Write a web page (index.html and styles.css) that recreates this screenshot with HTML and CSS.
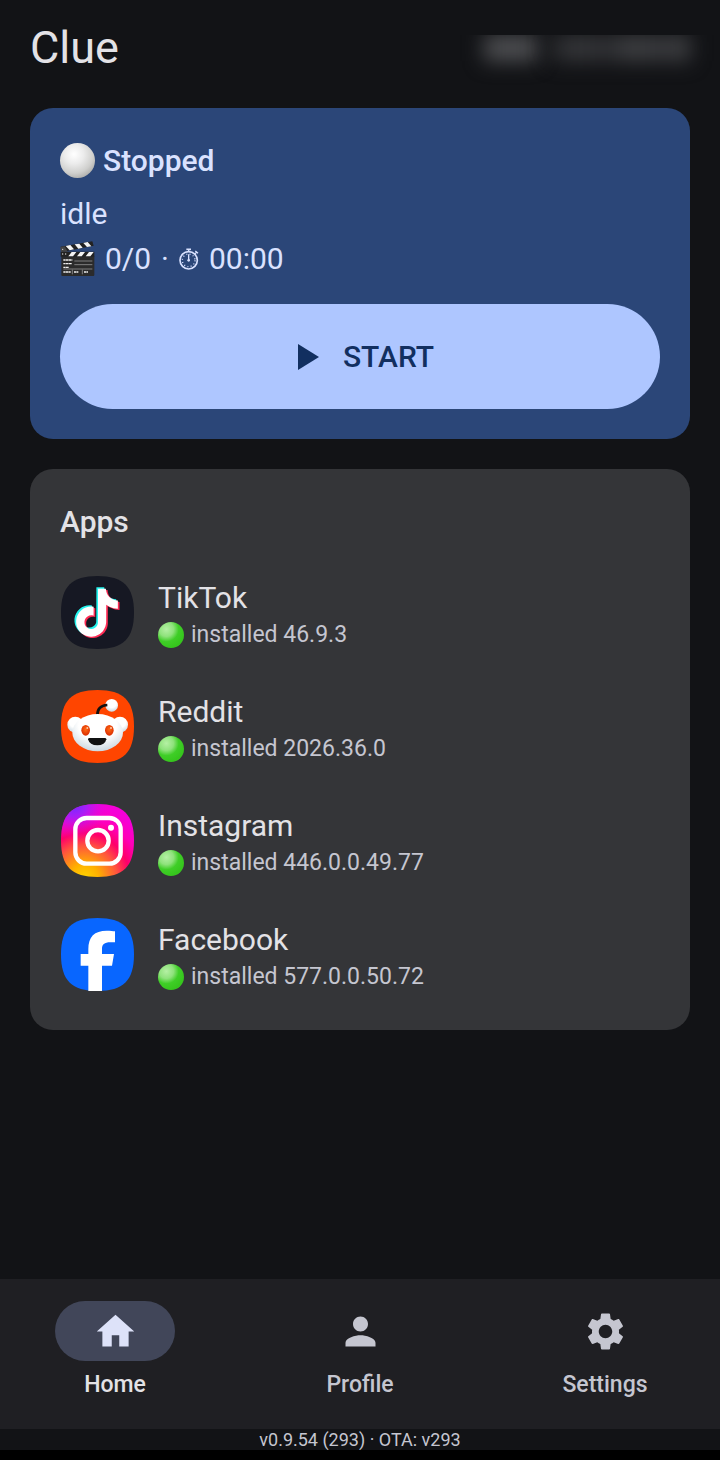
FILE: index.html
```html
<!DOCTYPE html>
<html lang="en">
<head>
    <meta charset="UTF-8">
    <meta name="viewport" content="width=device-width, initial-scale=1.0">
    <title>Clue</title>
    <link rel="stylesheet" href="styles.css">
</head>
<body>

<header class="topbar">
    <h1>Clue</h1>
    <div class="account" aria-hidden="true">
        <span class="smudge smudge-short"></span>
        <span class="smudge smudge-long"></span>
    </div>
</header>

<main class="content">
    <!-- Session status -->
    <section class="card status-card">
        <h2 class="status">
            <span class="ball"></span>
            Stopped
        </h2>
        <p class="line">idle</p>
        <p class="line stats">
            <svg class="clapper" viewBox="0 0 105 105" aria-hidden="true">
                <path fill="#2b2b2b" d="M4 46h99v56q0 3-3 3H7q-3 0-3-3z"/>
                <path fill="#222" d="M2 17L97 1l4 13L6 33z"/>
                <path fill="#f4f4f4" d="M17 15l14-3 11 13-13 3zM44 10l14-2 10 12-13 3zM70 6l13-3 11 13-13 2z"/>
                <path fill="#222" d="M2 32h101v15H2z"/>
                <path fill="#f4f4f4" d="M35 33h14L39 46H25zM61 33h14L65 46H51zM87 33h14L91 46H77z"/>
                <path fill="#444" d="M1 18l13-2 9 16H3z"/>
                <circle cx="8" cy="25" r="2" fill="#ddd"/>
                <circle cx="8" cy="39" r="2" fill="#ddd"/>
                <circle cx="17" cy="39" r="2" fill="#ddd"/>
                <path stroke="#aaa" stroke-width="2" d="M43 60h54M43 71h54M10 84h87M37 86v14M67 86v14"/>
                <path stroke="#eee" stroke-width="4" stroke-dasharray="7 1" d="M10 57h27M10 68h26M10 79h17M10 93h22M42 93h13M72 93h12"/>
            </svg>
            <span>0/0</span>
            <span>·</span>
            <svg class="stopwatch" viewBox="0 0 60 66" fill="none" stroke="currentColor" aria-hidden="true">
                <circle cx="29" cy="37" r="26" stroke-width="5"/>
                <circle cx="29" cy="37" r="19" stroke-width="4" stroke-dasharray="3 7"/>
                <path stroke-width="4" d="M29 3v9M29 19v20M48 17l5-5M49 9l8 7"/>
                <path stroke-width="5" d="M22 4h14"/>
                <circle cx="29" cy="37" r="4" fill="currentColor" stroke="none"/>
            </svg>
            <span>00:00</span>
        </p>
        <button class="start" type="button">
            <svg class="play" viewBox="0 0 21 26" aria-hidden="true"><path d="M0 0v26l21-13z"/></svg>
            START
        </button>
    </section>

    <!-- Installed apps -->
    <section class="card apps-card">
        <h2>Apps</h2>
        <ul class="apps">
            <li class="app">
                <svg class="app-icon" viewBox="0 0 225 225" aria-hidden="true">
                    <defs>
                        <path id="tile" d="M112.5 3C190 3 222 35 222 112.5S190 222 112.5 222 3 190 3 112.5 35 3 112.5 3z"/>
                        <path id="note" d="M12.525.02c1.31-.02 2.61-.01 3.91-.02.08 1.53.63 3.09 1.75 4.17 1.12 1.11 2.7 1.62 4.24 1.79v4.03c-1.44-.05-2.89-.35-4.2-.97-.57-.26-1.1-.59-1.62-.93-.01 2.92.01 5.84-.02 8.75-.08 1.4-.54 2.79-1.35 3.94-1.31 1.92-3.58 3.17-5.91 3.21-1.43.08-2.86-.31-4.08-1.03-2.02-1.19-3.44-3.37-3.65-5.71-.02-.5-.03-1-.01-1.49.18-1.9 1.12-3.72 2.58-4.96 1.66-1.44 3.98-2.13 6.15-1.72.02 1.48-.04 2.96-.04 4.44-.99-.32-2.15-.23-3.02.37-.63.41-1.11 1.04-1.36 1.75-.21.51-.15 1.07-.14 1.61.24 1.64 1.82 3.02 3.5 2.87 1.12-.01 2.19-.66 2.77-1.61.19-.33.4-.67.41-1.06.1-1.79.06-3.57.07-5.36.01-4.03-.01-8.05.02-12.07z"/>
                    </defs>
                    <use href="#tile" fill="#161823"/>
                    <use href="#note" fill="#25f4ee" transform="translate(34 37) scale(6)"/>
                    <use href="#note" fill="#fe2c55" transform="translate(44 45) scale(6)"/>
                    <use href="#note" fill="#fff" transform="translate(39 41) scale(6)"/>
                </svg>
                <div class="app-text">
                    <h3>TikTok</h3>
                    <p><span class="dot"></span>installed 46.9.3</p>
                </div>
            </li>
            <li class="app">
                <svg class="app-icon" viewBox="0 0 225 225" aria-hidden="true">
                    <defs>
                        <radialGradient id="snoo" cx=".5" cy=".3" r=".75">
                            <stop offset=".5" stop-color="#fff"/>
                            <stop offset="1" stop-color="#c3d2dc"/>
                        </radialGradient>
                        <radialGradient id="eye" cx=".5" cy=".4" r=".6">
                            <stop offset="0" stop-color="#ff6a14"/>
                            <stop offset="1" stop-color="#d92b00"/>
                        </radialGradient>
                    </defs>
                    <use href="#tile" fill="#ff4500"/>
                    <g transform="translate(-30 -27)">
                        <circle cx="76" cy="134" r="24" fill="url(#snoo)"/>
                        <circle cx="210" cy="134" r="24" fill="url(#snoo)"/>
                        <circle cx="185" cy="76" r="19" fill="url(#snoo)"/>
                        <path d="M142 106c0-18 9-30 30-31" fill="none" stroke="#111" stroke-width="8"/>
                        <ellipse cx="143" cy="158" rx="76" ry="56" fill="url(#snoo)"/>
                        <ellipse cx="107" cy="151" rx="13" ry="16" fill="url(#eye)"/>
                        <ellipse cx="178" cy="151" rx="13" ry="16" fill="url(#eye)"/>
                        <circle cx="112" cy="144" r="3" fill="#ffc9a8"/>
                        <circle cx="183" cy="144" r="3" fill="#ffc9a8"/>
                        <path d="M114 178q0-4 5-4h45q5 0 5 4-4 18-27 18t-28-18z" fill="#111"/>
                    </g>
                </svg>
                <div class="app-text">
                    <h3>Reddit</h3>
                    <p><span class="dot"></span>installed 2026.36.0</p>
                </div>
            </li>
            <li class="app">
                <svg class="app-icon" viewBox="0 0 225 225" aria-hidden="true">
                    <defs>
                        <radialGradient id="sunset" cx=".32" cy="1.02" r="1">
                            <stop offset="0" stop-color="#ffd600"/>
                            <stop offset=".2" stop-color="#ffb000"/>
                            <stop offset=".45" stop-color="#ff543e"/>
                            <stop offset=".62" stop-color="#ff0069"/>
                            <stop offset=".8" stop-color="#ff00b8"/>
                            <stop offset="1" stop-color="#f500d8"/>
                        </radialGradient>
                        <radialGradient id="violet" cx=".18" cy="0" r=".5">
                            <stop offset="0" stop-color="#6a2cff"/>
                            <stop offset=".35" stop-color="#9b22ff" stop-opacity=".85"/>
                            <stop offset="1" stop-color="#f500d8" stop-opacity="0"/>
                        </radialGradient>
                    </defs>
                    <use href="#tile" fill="url(#sunset)"/>
                    <use href="#tile" fill="url(#violet)"/>
                    <g transform="translate(-30 -24)" fill="none" stroke="#fff" stroke-width="13">
                        <rect x="76" y="69" width="136" height="137" rx="34"/>
                        <circle cx="144" cy="137" r="32"/>
                        <circle cx="183" cy="98" r="9" fill="#fff" stroke="none"/>
                    </g>
                </svg>
                <div class="app-text">
                    <h3>Instagram</h3>
                    <p><span class="dot"></span>installed 446.0.0.49.77</p>
                </div>
            </li>
            <li class="app">
                <svg class="app-icon" viewBox="0 0 225 225" aria-hidden="true">
                    <use href="#tile" fill="#0866ff"/>
                    <path fill="#fff" transform="translate(-30 -27)" d="M115 249v-76H92v-35h23v-14c0-38 18-56 55-56 11 0 20 1 25 2v33h-14c-18 0-25 6-25 21v14h36l-6 35h-30v76z"/>
                </svg>
                <div class="app-text">
                    <h3>Facebook</h3>
                    <p><span class="dot"></span>installed 577.0.0.50.72</p>
                </div>
            </li>
        </ul>
    </section>
</main>

<nav class="tabs">
    <a class="tab active" href="#home">
        <span class="tab-icon">
            <svg viewBox="0 0 24 24" aria-hidden="true"><path d="M10 20v-6h4v6h5v-8h3L12 3 2 12h3v8z"/></svg>
        </span>
        Home
    </a>
    <a class="tab" href="#profile">
        <span class="tab-icon">
            <svg viewBox="0 0 24 24" aria-hidden="true"><path d="M12 12c2.21 0 4-1.79 4-4s-1.79-4-4-4-4 1.79-4 4 1.79 4 4 4zm0 2c-2.67 0-8 1.34-8 4v2h16v-2c0-2.66-5.33-4-8-4z"/></svg>
        </span>
        Profile
    </a>
    <a class="tab" href="#settings">
        <span class="tab-icon">
            <svg viewBox="0 0 24 24" aria-hidden="true"><path d="M19.14 12.94c.04-.3.06-.61.06-.94 0-.32-.02-.64-.07-.94l2.03-1.58c.18-.14.23-.41.12-.61l-1.92-3.32c-.12-.22-.37-.29-.59-.22l-2.39.96c-.5-.38-1.03-.7-1.62-.94l-.36-2.54c-.04-.24-.24-.41-.48-.41h-3.84c-.24 0-.43.17-.47.41l-.36 2.54c-.59.24-1.13.57-1.62.94l-2.39-.96c-.22-.08-.47 0-.59.22L2.74 8.87c-.12.21-.08.47.12.61l2.03 1.58c-.05.3-.09.63-.09.94s.02.64.07.94l-2.03 1.58c-.18.14-.23.41-.12.61l1.92 3.32c.12.22.37.29.59.22l2.39-.96c.5.38 1.03.7 1.62.94l.36 2.54c.05.24.24.41.48.41h3.84c.24 0 .44-.17.47-.41l.36-2.54c.59-.24 1.13-.56 1.62-.94l2.39.96c.22.08.47 0 .59-.22l1.92-3.32c.12-.22.07-.47-.12-.61l-2.01-1.58zM12 15.6c-1.98 0-3.6-1.62-3.6-3.6s1.62-3.6 3.6-3.6 3.6 1.62 3.6 3.6-1.62 3.6-3.6 3.6z"/></svg>
        </span>
        Settings
    </a>
</nav>

<footer class="version">v0.9.54 (293) · OTA: v293</footer>

</body>
</html>
```
FILE: styles.css
```css
* {
    box-sizing: border-box;
}

body {
    display: flex;
    flex-direction: column;
    min-height: 100vh;
    margin: 0;
    background-color: #121316;
    border-bottom: 10px solid #000; /* system gesture bar */
    color: #e3e2e6;
    font-family: Roboto, sans-serif;
    font-size: 30px;
    line-height: 45px;
}

h1, h2, h3, p, ul {
    margin: 0;
    padding: 0;
}

h2 {
    font-size: 30px;
    font-weight: 500;
}

/* Top bar */
.topbar {
    display: flex;
    justify-content: space-between;
    align-items: center;
    height: 108px;
    padding: 0 0 12px 30px;
}

h1 {
    font-size: 45px;
    font-weight: 400;
    line-height: 60px;
}

/* Account name is kept hidden behind a blur */
.account {
    display: flex;
    gap: 12px;
    width: 260px;
    height: 50px;
    padding: 0 30px 0 24px;
    margin-top: 24px;
    overflow: hidden;
}

.smudge {
    height: 26px;
    background-color: #46474a;
    filter: blur(10px);
}

.smudge-short {
    width: 54px;
    background-color: #4e4f52;
}

.smudge-long {
    flex: 1;
    background-image: linear-gradient(90deg, #28292c, #38393c, #2e2f32, #414245, #37383b, #434447);
}

/* Cards */
.content {
    display: flex;
    flex-direction: column;
    gap: 30px;
    padding: 0 30px 30px;
}

.card {
    padding: 30px;
    border-radius: 23px;
}

.status-card {
    background-color: #2b4678;
    color: #dae2ff;
}

.status {
    display: flex;
    align-items: center;
    gap: 8px;
    margin-bottom: 8px;
}

.ball {
    width: 35px;
    height: 35px;
    border-radius: 50%;
    background: radial-gradient(circle at 40% 32%, #fff 0%, #ececec 30%, #cfcfcd 60%, #a3a3a1 85%, #bdbdb8 100%);
}

.stats {
    display: flex;
    align-items: center;
    gap: 10px;
}

.clapper {
    width: 35px;
    height: 35px;
}

.stopwatch {
    width: 20px;
    height: 22px;
}

.start {
    display: flex;
    justify-content: center;
    align-items: center;
    gap: 24px;
    width: 100%;
    height: 105px;
    margin-top: 23px;
    padding: 0 24px 0 36px;
    border: none;
    border-radius: 53px;
    background-color: #aec6ff;
    color: #122f60;
    font-family: inherit;
    font-size: 30px;
    font-weight: 500;
    cursor: pointer;
}

.play {
    width: 21px;
    height: 26px;
    fill: currentColor;
}

.apps-card {
    padding-bottom: 19px;
    background-color: #343538;
}

.apps {
    margin-top: 11px;
    list-style: none;
}

.app {
    display: flex;
    align-items: center;
    gap: 23px;
    height: 114px;
}

.app-icon {
    width: 75px;
    height: 75px;
}

.app-text h3 {
    font-size: 30px;
    font-weight: 400;
}

.app-text p {
    display: flex;
    align-items: center;
    gap: 7px;
    color: #c5c6d0;
    font-size: 23px;
    line-height: 30px;
}

.dot {
    width: 26px;
    height: 26px;
    border-radius: 50%;
    background: radial-gradient(circle at 32% 28%, #b5f0a4 0%, #8fe27c 28%, #3fce27 48%, #35c51c 75%, #5ad647 100%);
}

/* Bottom navigation */
.tabs {
    display: grid;
    grid-template-columns: repeat(3, 1fr);
    gap: 15px;
    margin-top: auto;
    padding: 22px 0 29px;
    background-color: #1f1f23;
}

.tab {
    display: flex;
    flex-direction: column;
    align-items: center;
    gap: 9px;
    color: #c5c6d0;
    font-size: 23px;
    font-weight: 500;
    line-height: 30px;
    text-decoration: none;
}

.tab-icon {
    display: flex;
    justify-content: center;
    align-items: center;
    width: 120px;
    height: 60px;
    border-radius: 30px;
}

.tab-icon svg {
    width: 45px;
    height: 45px;
    fill: currentColor;
}

.active {
    color: #e3e2e6;
}

.active .tab-icon {
    background-color: #414659;
    color: #dde2f9;
}

.version {
    color: #c5c6d0;
    font-size: 18px;
    line-height: 21px;
    text-align: center;
}
```
